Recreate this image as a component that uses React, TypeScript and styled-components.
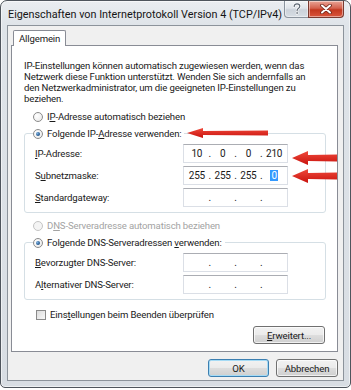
import { FC, ReactNode } from "react";
import styled, { createGlobalStyle } from "styled-components";

const GlobalStyle = createGlobalStyle`
  html, body {
    margin: 0;
    padding: 0;
    background: #ffffff;
  }
  body {
    font-family: Roboto, "Noto Sans", sans-serif;
    color: #1a1a1a;
  }
`;

const Window = styled.div`
  position: relative;
  box-sizing: border-box;
  width: 351px;
  height: 388px;
  padding: 0 6px 6px;
  border: 1px solid #4f555d;
  border-radius: 7px 7px 5px 5px;
  background: linear-gradient(180deg, #eaedf1 0%, #dfe4e9 24px, #d8dde3 100%);
  box-shadow: inset 0 0 0 1px rgba(255, 255, 255, 0.55);
  display: flex;
  flex-direction: column;
`;

const TitleBar = styled.div`
  height: 24px;
  display: flex;
  align-items: flex-start;
`;

const Title = styled.div`
  flex: 1;
  padding: 7px 0 0 1px;
  font-size: 10.8px;
  line-height: 13px;
  color: #151515;
  white-space: nowrap;
`;

const CaptionButton = styled.div<{ $close?: boolean }>`
  box-sizing: border-box;
  width: ${(p) => (p.$close ? 36 : 25)}px;
  height: 17px;
  display: flex;
  align-items: center;
  justify-content: center;
  border: 1px solid ${(p) => (p.$close ? "#7a3a30" : "#8a939d")};
  border-top: none;
  border-radius: ${(p) => (p.$close ? "0 0 4px 0" : "0 0 0 4px")};
  margin-left: ${(p) => (p.$close ? -1 : 0)}px;
  background: ${(p) =>
    p.$close
      ? "linear-gradient(180deg, #e9a596 0%, #d4614d 45%, #c3381f 55%, #d9553c 100%)"
      : "linear-gradient(180deg, #f2f4f6 0%, #dfe4ea 45%, #cbd2da 55%, #d7dde4 100%)"};
  box-shadow: inset 0 0 0 1px rgba(255, 255, 255, 0.45);
`;

const Client = styled.div`
  flex: 1;
  display: flex;
  flex-direction: column;
  background: #f0f0f0;
  border: 1px solid #8c939b;
  padding: 4px 5px 0 3px;
  font-size: 9.6px;
  line-height: 11px;
  letter-spacing: -0.15px;
`;

const TabStrip = styled.div`
  display: flex;
  padding-left: 2px;
  margin-bottom: -1px;
  position: relative;
  z-index: 1;
`;

const Tab = styled.div`
  box-sizing: border-box;
  height: 16px;
  padding: 0 5px;
  line-height: 15px;
  background: #ffffff;
  border: 1px solid #898c95;
  border-bottom: none;
  border-radius: 2px 2px 0 0;
`;

const Panel = styled.div`
  flex: 1;
  display: flex;
  flex-direction: column;
  background: #ffffff;
  border: 1px solid #898c95;
  padding: 14px 11px 7px 12px;
`;

const Intro = styled.p`
  margin: 0;
  padding-right: 14px;
  line-height: 11px;
`;

const OptionRow = styled.label<{ $disabled?: boolean; $indent?: number; $gap?: number }>`
  display: flex;
  align-items: center;
  gap: 4px;
  height: 13px;
  margin-top: ${(p) => p.$gap ?? 6}px;
  padding-left: ${(p) => p.$indent ?? 9}px;
  color: ${(p) => (p.$disabled ? "#a3a3a3" : "#1a1a1a")};
  white-space: nowrap;
`;

const Radio = styled.span<{ $checked?: boolean; $disabled?: boolean }>`
  position: relative;
  box-sizing: border-box;
  width: 10px;
  height: 10px;
  border-radius: 50%;
  border: 1px solid ${(p) => (p.$disabled ? "#c4c4c4" : "#8b8b8b")};
  background: ${(p) =>
    p.$disabled ? "#f4f4f4" : "radial-gradient(circle at 35% 35%, #ffffff 0%, #e6e6e6 100%)"};

  &::after {
    content: "";
    display: ${(p) => (p.$checked ? "block" : "none")};
    position: absolute;
    inset: 2px;
    border-radius: 50%;
    background: radial-gradient(circle at 35% 35%, #7fb2e0 0%, #2a5f96 60%, #163f6b 100%);
  }
`;

const CheckBox = styled.span`
  box-sizing: border-box;
  width: 10px;
  height: 10px;
  border: 1px solid #8b8b8b;
  background: linear-gradient(135deg, #dcdcdc 0%, #f8f8f8 100%);
`;

const Key = styled.span`
  text-decoration: underline;
  text-underline-offset: 1px;
`;

const GroupBox = styled.fieldset`
  display: flex;
  flex-direction: column;
  gap: 3px;
  margin: 4px 0 0;
  padding: 4px 10px 5px 10px;
  min-width: 0;
  border: 1px solid #d5dfe5;
  border-radius: 3px;
`;

const Legend = styled.legend`
  margin-left: -2px;
  padding: 0 3px 0 0;
  height: 13px;
  display: flex;
  align-items: center;
  gap: 4px;
  white-space: nowrap;
`;

const FieldRow = styled.div`
  display: flex;
  align-items: center;
  height: 19px;
`;

const FieldLabel = styled.span`
  width: 148px;
`;

const IpBox = styled.div`
  box-sizing: border-box;
  width: 105px;
  height: 19px;
  display: flex;
  align-items: center;
  padding: 0 2px;
  background: #ffffff;
  border: 1px solid #dbdfe6;
  border-top-color: #abadb3;
  font-size: 10px;
`;

const Octet = styled.span`
  flex: 1;
  text-align: center;
`;

const Selected = styled.span`
  background: #3399ff;
  color: #ffffff;
  padding: 0 1px;
`;

const Dot = styled.span`
  width: 4px;
  text-align: center;
`;

const PushButton = styled.button<{ $width: number; $default?: boolean }>`
  box-sizing: border-box;
  width: ${(p) => p.$width}px;
  height: 18px;
  padding: 0;
  font: inherit;
  letter-spacing: inherit;
  color: #1a1a1a;
  border: 1px solid ${(p) => (p.$default ? "#3c7fb1" : "#707070")};
  border-radius: 3px;
  background: linear-gradient(180deg, #f2f2f2 0%, #ebebeb 48%, #dddddd 52%, #cfcfcf 100%);
  box-shadow: inset 0 0 0 1px ${(p) => (p.$default ? "#a6dbf5" : "rgba(255,255,255,0.7)")};
`;

const PanelActions = styled.div`
  display: flex;
  justify-content: flex-end;
  margin-top: auto;
  padding-right: 1px;
`;

const Footer = styled.div`
  display: flex;
  justify-content: flex-end;
  gap: 7px;
  padding: 7px 0 3px;
`;

/* Anmerkungen (rote Pfeile) liegen über dem Dialog */
const Overlay = styled.svg`
  position: absolute;
  left: -1px;
  top: -1px;
  pointer-events: none;
`;

type IpProps = { octets: ReactNode[] };

const IpField: FC<IpProps> = ({ octets }) => (
  <IpBox>
    {octets.flatMap((o, i) => [
      i > 0 ? <Dot key={`d${i}`}>.</Dot> : null,
      <Octet key={`o${i}`}>{o}</Octet>,
    ])}
  </IpBox>
);

const Field: FC<{ label: ReactNode; octets: ReactNode[] }> = ({ label, octets }) => (
  <FieldRow>
    <FieldLabel>{label}</FieldLabel>
    <IpField octets={octets} />
  </FieldRow>
);

const arrow = (tipX: number, y: number, tailX: number, headLen: number, headH: number, shaftH: number) => {
  const hx = tipX + headLen;
  return [
    [tipX, y],
    [hx, y - headH],
    [hx, y - shaftH],
    [tailX, y - shaftH - 0.5],
    [tailX, y + shaftH + 0.5],
    [hx, y + shaftH],
    [hx, y + headH],
  ]
    .map((p) => p.join(","))
    .join(" ");
};

const helpPath =
  "M2.2 3.6 C2.2 1.6 3.6 0.9 5 0.9 C6.7 0.9 7.8 1.9 7.8 3.3 C7.8 4.6 6.8 5.2 6 5.7 C5.3 6.1 5.1 6.5 5.1 7.4 M5.1 9.2 L5.1 10.6";

const HelpGlyph = () => (
  <svg width="10" height="12" viewBox="0 0 10 12">
    <path d={helpPath} fill="none" stroke="#ffffff" strokeWidth="2.6" strokeLinecap="round" />
    <path d={helpPath} fill="none" stroke="#5c6672" strokeWidth="1.2" strokeLinecap="round" />
  </svg>
);

const CloseGlyph = () => (
  <svg width="12" height="10" viewBox="0 0 12 10">
    <path d="M2 1.5 L10 8.5 M10 1.5 L2 8.5" stroke="#6a2418" strokeWidth="3.6" strokeLinecap="round" />
    <path d="M2 1.5 L10 8.5 M10 1.5 L2 8.5" stroke="#ffffff" strokeWidth="2" strokeLinecap="round" />
  </svg>
);

export default function App() {
  return (
    <>
      <GlobalStyle />
      <Window>
        <TitleBar>
          <Title>Eigenschaften von Internetprotokoll Version 4 (TCP/IPv4)</Title>
          <CaptionButton>
            <HelpGlyph />
          </CaptionButton>
          <CaptionButton $close>
            <CloseGlyph />
          </CaptionButton>
        </TitleBar>
        <Client>
          <TabStrip>
            <Tab>Allgemein</Tab>
          </TabStrip>
          <Panel>
            <Intro>
              IP-Einstellungen können automatisch zugewiesen werden, wenn das Netzwerk diese Funktion
              unterstützt. Wenden Sie sich andernfalls an den Netzwerkadministrator, um die geeigneten
              IP-Einstellungen zu beziehen.
            </Intro>
            <OptionRow>
              <Radio />
              <span>
                I<Key>P</Key>-Adresse automatisch beziehen
              </span>
            </OptionRow>
            <GroupBox>
              <Legend>
                <Radio $checked />
                <span>
                  Folgende IP-<Key>A</Key>dresse verwenden:
                </span>
              </Legend>
              <Field
                label={
                  <>
                    <Key>I</Key>P-Adresse:
                  </>
                }
                octets={["10", "0", "0", "210"]}
              />
              <Field
                label={
                  <>
                    S<Key>u</Key>bnetzmaske:
                  </>
                }
                octets={["255", "255", "255", <Selected key="s">0</Selected>]}
              />
              <Field
                label={
                  <>
                    <Key>S</Key>tandardgateway:
                  </>
                }
                octets={["", "", "", ""]}
              />
            </GroupBox>
            <OptionRow $disabled>
              <Radio $disabled />
              <span>
                D<Key>N</Key>S-Serveradresse automatisch beziehen
              </span>
            </OptionRow>
            <GroupBox>
              <Legend>
                <Radio $checked />
                <span>
                  Folgende DNS-Serveradressen <Key>v</Key>erwenden:
                </span>
              </Legend>
              <Field
                label={
                  <>
                    <Key>B</Key>evorzugter DNS-Server:
                  </>
                }
                octets={["", "", "", ""]}
              />
              <Field
                label={
                  <>
                    A<Key>l</Key>ternativer DNS-Server:
                  </>
                }
                octets={["", "", "", ""]}
              />
            </GroupBox>
            <OptionRow $indent={12} $gap={8}>
              <CheckBox />
              <span>
                Eins<Key>t</Key>ellungen beim Beenden überprüfen
              </span>
            </OptionRow>
            <PanelActions>
              <PushButton $width={72}>
                <Key>E</Key>rweitert...
              </PushButton>
            </PanelActions>
          </Panel>
          <Footer>
            <PushButton $width={61} $default>
              OK
            </PushButton>
            <PushButton $width={62}>Abbrechen</PushButton>
          </Footer>
        </Client>
        <Overlay width="351" height="390" viewBox="0 0 351 390">
          <defs>
            <linearGradient id="red" x1="0" y1="0" x2="0" y2="1">
              <stop offset="0" stopColor="#ef4a3c" />
              <stop offset="1" stopColor="#c9120d" />
            </linearGradient>
          </defs>
          <polygon points={arrow(187, 133, 268, 16, 5, 2)} fill="url(#red)" />
          <polygon points={arrow(292, 158, 337, 16, 7, 3)} fill="url(#red)" />
          <polygon points={arrow(292, 176, 337, 16, 7, 3)} fill="url(#red)" />
        </Overlay>
      </Window>
    </>
  );
}
